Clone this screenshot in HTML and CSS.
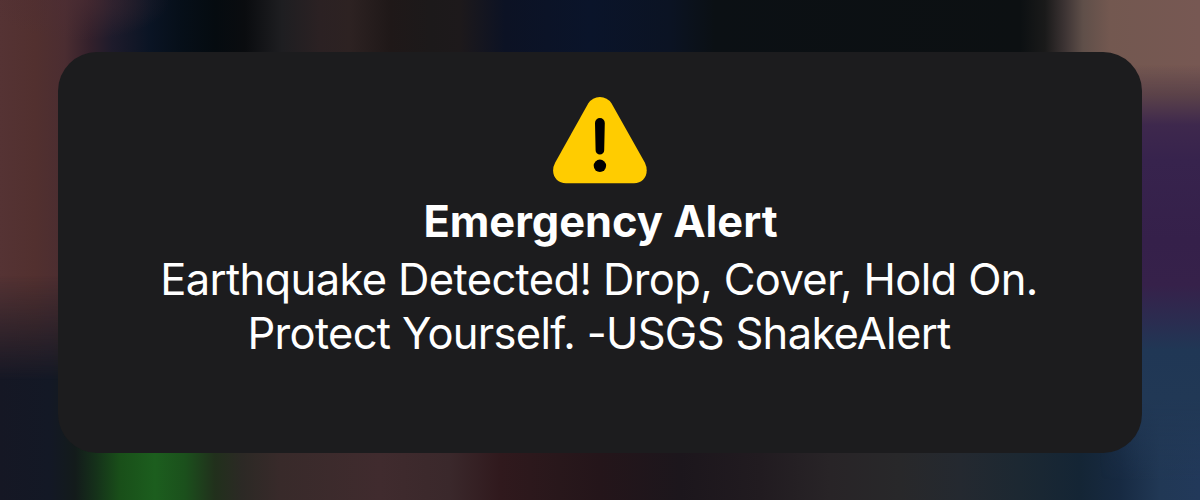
FILE: index.html
```html
<!DOCTYPE html>
<html lang="en">
<head>
<meta charset="utf-8">
<title>Emergency Alert</title>
<link rel="stylesheet" href="styles.css">
</head>
<body>
<main class="screen">
  <div class="wallpaper-top"></div>
  <div class="wallpaper-side"></div>
  <section class="alert" role="alertdialog" aria-labelledby="title">
    <svg class="alert-icon" viewBox="0 0 94 87" aria-hidden="true">
      <path fill="#ffcc00" d="M35.200 6.500Q39.500 0 46.900 0T58.600 6.500L91.900 65.800Q93.700 69.500 93.700 73.500C93.700 81 88.300 86.300 81 86.300H13C5.600 86.300.1 81 .1 73.500Q.1 69.500 2.100 65.800Z"/>
      <path fill="#000" d="M42 26a4.900 4.900 0 0 1 9.800 0L51.200 53.200a4.300 4.300 0 0 1-8.600 0Z"/>
      <circle cx="46.900" cy="68.800" r="6.200"/>
    </svg>
    <h1 class="alert-title" id="title">Emergency Alert</h1>
    <p class="alert-message"><span class="line line-first">Earthquake Detected! Drop, Cover, Hold On.</span> <span class="line line-second">Protect Yourself. -USGS ShakeAlert</span></p>
  </section>
</main>
</body>
</html>
```
FILE: styles.css
```css
* { box-sizing: border-box; }

body { margin: 0; }

.screen {
  position: relative;
  width: 1200px;
  height: 500px;
  padding: 52px 58px 47px;
  overflow: hidden;
  font-family: Inter, "Liberation Sans", sans-serif;
  background: linear-gradient(90deg, #151724 0, #131825 50px, #131b1b 75px, #15301a 95px, #194f19 120px, #1c5e1e 155px, #1b501c 185px, #21301c 215px, #2c2925 242px, #382a2a 280px, #402b2e 380px, #3a282b 450px, #30191d 500px, #28171b 560px, #24151a 600px, #1c161c 680px, #211b20 760px, #282427 830px, #28282a 900px, #242930 960px, #1c2832 1020px, #142535 1080px, #172a42 1120px, #213855 1160px, #22395a 1200px);
}

.wallpaper-top,
.wallpaper-side {
  position: absolute;
  inset: 0;
}

.wallpaper-top {
  background:
    radial-gradient(ellipse 90px 40px at 80px 0, rgb(78 46 52 / 60%), transparent),
    linear-gradient(90deg, #553334 0, #52302f 35px, #4b2d31 65px, #33202b 90px, #1e1b2b 112px, #0a1424 150px, #060f19 180px, #050b10 215px, #0a0c0f 245px, #1e1e21 282px, #2b2123 320px, #2d2222 350px, #1f1818 390px, #1c191a 430px, #1d191b 460px, #0c1224 505px, #0a142a 590px, #0b1323 670px, #0b1014 715px, #0c1012 1020px, #1a1a1a 1045px, #3d3434 1065px, #5f4f49 1083px, #735850 1110px, #775853 1200px);
  mask-image: linear-gradient(#000 275px, transparent 380px);
}

.wallpaper-side {
  left: 1100px;
  background: linear-gradient(transparent 65px, #5b4249 95px, #3e284d 125px, #37234d 160px, #35204a 240px, #36214a 285px, #2b2c50 320px, #203755 350px, #213855 400px, transparent 480px);
  mask-image: linear-gradient(90deg, transparent, #000 40px);
}

.alert {
  position: relative;
  display: flex;
  flex-direction: column;
  align-items: center;
  height: 401px;
  padding-top: 45px;
  border-radius: 39px;
  color: #fff;
  background: #1c1c1e;
}

.alert-icon {
  width: 94px;
  height: 87px;
}

.alert-title {
  margin: 9px 0 0;
  padding-left: 1px;
  font-size: 43.4px;
  font-weight: 700;
  line-height: 56px;
  white-space: nowrap;
}

.alert-message {
  margin: 4px 0 0;
  padding-right: 2px;
  font-size: 43.5px;
  line-height: 53.5px;
  text-align: center;
}

.line {
  display: block;
  white-space: nowrap;
}

.line-first { letter-spacing: -0.64px; }

.line-second { letter-spacing: -0.69px; }
```
